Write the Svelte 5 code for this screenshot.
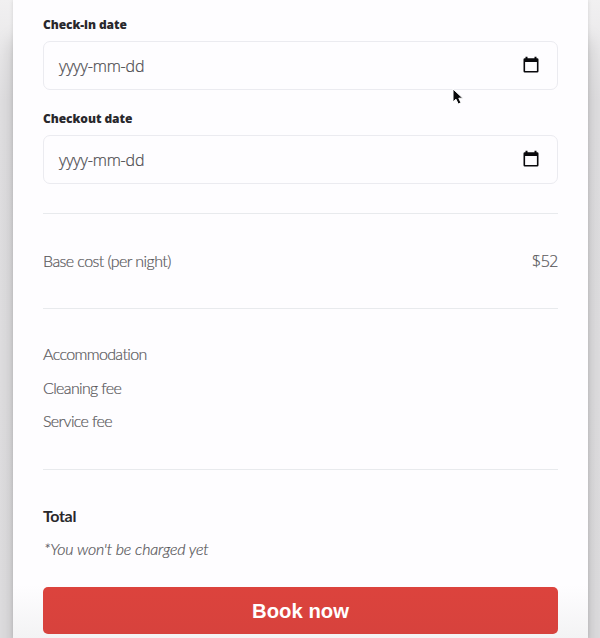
<script>
  const dates = ['Check-in date', 'Checkout date'];
  const fees = ['Accommodation', 'Cleaning fee', 'Service fee'];
</script>

<div class="page">
  <main class="card">
    {#each dates as label}
      <div class="field">
        <span class="label">{label}</span>
        <div class="input">
          <span class="placeholder">yyyy-mm-dd</span>
          <svg width="16" height="18" viewBox="0 0 16 18">
            <path fill="#09090c" fill-rule="evenodd" d="M2.500.700h2v1.500h7V.700h2v1.500h.700q1.300 0 1.300 1.300v11.800q0 1.300-1.300 1.300H1.800Q.500 16.600.500 15.300V3.500Q.500 2.200 1.800 2.200h.700zM2.100 6v9h11.800V6z" />
          </svg>
        </div>
      </div>
    {/each}
    <section class="base">
      <span class="text">Base cost (per night)</span>
      <span class="price">$52</span>
    </section>
    <section class="fees">
      {#each fees as fee}
        <div class="text">{fee}</div>
      {/each}
    </section>
    <section class="summary">
      <div class="total">Total</div>
      <div class="note">*You won't be charged yet</div>
    </section>
    <button>Book now</button>
  </main>
  <svg class="cursor" width="14" height="19" viewBox="0 0 14 19">
    <path d="M2 2v13l3-2.800 2.200 4.800 2.800-1.200-2.200-4.600h4z" fill="#09090b" stroke="#fff" stroke-width="1" />
  </svg>
</div>

<style>
  :global(body) { margin: 0; }
  .page {
    position: relative;
    box-sizing: border-box;
    width: 600px;
    height: 638px;
    overflow: hidden;
    padding: 0 12px 0 13px;
    background: linear-gradient(180deg, #f1f0f1 0, #e2e1e3 100px, #e0dfe1 100%);
    font-family: Lato, "Liberation Sans", sans-serif;
    font-size: 16px;
    color: #58575a;
  }
  .card {
    box-sizing: border-box;
    height: 638px;
    padding: 13px 30px 0;
    background: linear-gradient(180deg, #fefdff 0, #fefdff 585px, #f3f3f4 638px);
    box-shadow: 0 0 4px rgba(0, 0, 0, .12), 0 40px 18px rgba(0, 0, 0, .18);
  }
  .field { height: 94px; }
  .label {
    display: block;
    height: 28px;
    font: 800 12px/24px "Open Sans", sans-serif;
    letter-spacing: -.06px;
    color: #29282c;
  }
  .input {
    box-sizing: border-box;
    height: 49px;
    display: flex;
    align-items: center;
    justify-content: space-between;
    padding: 0 18px 0 15px;
    border: 1px solid #ebebf0;
    border-radius: 7px;
  }
  .input svg { margin-bottom: 2px; }
  .placeholder {
    font: 300 16px/24px "Open Sans", sans-serif;
    letter-spacing: -.17px;
    color: #4c4b4f;
  }
  .text, .note, .price, .placeholder { -webkit-text-stroke: .2px currentColor; }
  section { border-top: 1px solid #e8eaed; }
  .base {
    display: flex;
    justify-content: space-between;
    margin-top: 12px;
    height: 95px;
    padding-top: 30px;
    box-sizing: border-box;
  }
  .price {
    font: 300 16px/34px "Open Sans", sans-serif;
    letter-spacing: -.5px;
  }
  .fees { height: 132px; padding-top: 28px; }
  .text { font-weight: 300; line-height: 34px; letter-spacing: -.57px; }
  .fees .text { height: 33.700px; letter-spacing: -.64px; }
  .summary { height: 88px; padding-top: 29px; line-height: 34px; }
  .total {
    height: 33px;
    font-weight: 700;
    font-size: 16px;
    letter-spacing: -.35px;
    color: #29282c;
  }
  .note { padding-left: 1px; font-style: italic; font-weight: 300; letter-spacing: -.17px; }
  button {
    display: block;
    width: 515px;
    height: 47px;
    padding: 0;
    border: 0;
    border-radius: 5px;
    background: linear-gradient(#dc433d, #d7423d);
    color: #fff;
    font: 700 20.300px/46px "Liberation Sans", Arial, sans-serif;
  }
  .cursor { position: absolute; left: 451px; top: 87px; }
</style>
